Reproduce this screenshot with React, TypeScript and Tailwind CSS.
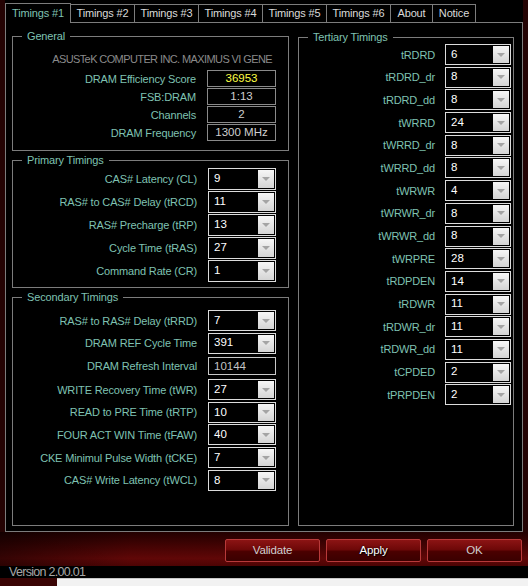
import React from "react";

const LABEL = "text-[11px] leading-[14px] tracking-[-0.15px] text-[#7fc2b2] whitespace-nowrap";

function Arrow() {
  return (
    <span className="my-[1px] mr-[1px] flex w-[16px] items-center justify-center bg-[linear-gradient(to_bottom,#f6f6f6,#d4d4d4)]">
      <span className="h-0 w-0 border-x-[4px] border-t-[4px] border-x-transparent border-t-[#a4a4a4]" />
    </span>
  );
}

function Dropdown({ value, w }: { value: string; w: string }) {
  return (
    <div className={`flex h-full ${w} border border-[#dcdcdc] bg-black`}>
      <span className="flex flex-1 items-center pl-[5px] text-[11.5px] leading-none text-white">{value}</span>
      <Arrow />
    </div>
  );
}

function DropRow({ label, value, h, w, gap }: { label: string; value: string; h: string; w: string; gap: string }) {
  return (
    <div className={`flex ${h} items-center justify-end ${gap}`}>
      <span className={LABEL}>{label}</span>
      <Dropdown value={value} w={w} />
    </div>
  );
}

function InfoRow({ label, value, yellow }: { label: string; value: string; yellow?: boolean }) {
  return (
    <div className="flex h-[17px] items-center justify-end gap-[11px]">
      <span className={LABEL}>{label}</span>
      <div
        className={`flex h-full w-[69px] items-center justify-center border border-[#8a8a8a] bg-black text-[11.5px] leading-none ${
          yellow ? "text-[#ffff44]" : "text-[#cfcfcf]"
        }`}
      >
        {value}
      </div>
    </div>
  );
}

function Legend({ children }: { children: React.ReactNode }) {
  return <legend className={`ml-[9px] px-[5px] py-0 ${LABEL}`}>{children}</legend>;
}

const tabs = [
  { t: "Timings #2", w: "w-[64px]" },
  { t: "Timings #3", w: "w-[64px]" },
  { t: "Timings #4", w: "w-[64px]" },
  { t: "Timings #5", w: "w-[64px]" },
  { t: "Timings #6", w: "w-[64px]" },
  { t: "About", w: "w-[42px]" },
  { t: "Notice", w: "w-[43px]" },
];

const primary = [
  ["CAS# Latency (CL)", "9"],
  ["RAS# to CAS# Delay (tRCD)", "11"],
  ["RAS# Precharge (tRP)", "13"],
  ["Cycle Time (tRAS)", "27"],
  ["Command Rate (CR)", "1"],
];

const secondaryA = [
  ["RAS# to RAS# Delay (tRRD)", "7"],
  ["DRAM REF Cycle Time", "391"],
];
const secondaryB = [
  ["WRITE Recovery Time (tWR)", "27"],
  ["READ to PRE Time (tRTP)", "10"],
  ["FOUR ACT WIN Time (tFAW)", "40"],
  ["CKE Minimul Pulse Width (tCKE)", "7"],
  ["CAS# Write Latency (tWCL)", "8"],
];

const tertiary = [
  ["tRDRD", "6"],
  ["tRDRD_dr", "8"],
  ["tRDRD_dd", "8"],
  ["tWRRD", "24"],
  ["tWRRD_dr", "8"],
  ["tWRRD_dd", "8"],
  ["tWRWR", "4"],
  ["tWRWR_dr", "8"],
  ["tWRWR_dd", "8"],
  ["tWRPRE", "28"],
  ["tRDPDEN", "14"],
  ["tRDWR", "11"],
  ["tRDWR_dr", "11"],
  ["tRDWR_dd", "11"],
  ["tCPDED", "2"],
  ["tPRPDEN", "2"],
];

function Button({ children, focus }: { children: React.ReactNode; focus?: boolean }) {
  return (
    <div
      className={`flex h-[23px] w-[95px] items-center justify-center rounded-[2px] border border-[#b83a3a] bg-[linear-gradient(to_bottom,#8c1414_0%,#6e0808_45%,#4a0000_55%,#3a0000_100%)] text-[11.5px] tracking-[-0.15px] ${
        focus ? "text-white [text-shadow:0_0_2px_#000,1px_1px_1px_#000]" : "text-[#cfcfcf]"
      }`}
    >
      {children}
    </div>
  );
}

export default function App() {
  return (
    <div className="flex h-[586px] w-[528px] flex-col overflow-hidden bg-[#240303] font-['Liberation_Sans',Arial,sans-serif]">
      {/* top area */}
      <div className="flex flex-col px-[5px]">
        {/* tabs */}
        <div className="flex h-[23px] items-end bg-black">
          <div className="flex h-[20px] w-[66px] items-center justify-center border-x border-t border-[#7c7c7c] bg-black pb-[1px] text-[11px] tracking-[-0.15px] text-[#7fc2b2]">
            Timings #1
          </div>
          {tabs.map((t) => (
            <div
              key={t.t}
              className={`flex h-[19px] ${t.w} items-center justify-center border-y border-r border-[#7c7c7c] text-[11px] tracking-[-0.15px] text-[#dadada]`}
            >
              {t.t}
            </div>
          ))}
          <div className="h-[19px] flex-1 border-b border-[#7c7c7c]" />
        </div>
        {/* panel */}
        <div className="flex h-[509px] gap-[9px] border-x border-b border-[#7c7c7c] bg-black pl-[6px] pt-[6px]">
          <div className="flex w-[277px] flex-col gap-[2px]">
            <fieldset className="m-0 h-[122px] border border-[#7c7c7c] p-0">
              <Legend>General</Legend>
              <div className="pr-[16px] pt-[9px] text-right text-[11px] leading-[14px] tracking-[-0.6px] text-[#8a8a8a]">
                ASUSTeK COMPUTER INC. MAXIMUS VI GENE
              </div>
              <div className="mt-[4px] flex flex-col gap-[1px] pr-[12px]">
                <InfoRow label="DRAM Efficiency Score" value="36953" yellow />
                <InfoRow label="FSB:DRAM" value="1:13" />
                <InfoRow label="Channels" value="2" />
                <InfoRow label="DRAM Frequency" value="1300 MHz" />
              </div>
            </fieldset>
            <fieldset className="m-0 h-[135px] border border-[#7c7c7c] p-0">
              <Legend>Primary Timings</Legend>
              <div className="flex flex-col gap-[1px] pr-[12px] pt-[1px]">
                {primary.map(([l, v]) => (
                  <DropRow key={l} label={l} value={v} h="h-[22px]" w="w-[68px]" gap="gap-[11px]" />
                ))}
              </div>
            </fieldset>
            <fieldset className="m-0 h-[236px] border border-[#7c7c7c] p-0">
              <Legend>Secondary Timings</Legend>
              <div className="flex flex-col gap-[1.7px] pr-[12px] pt-[6px]">
                {secondaryA.map(([l, v]) => (
                  <DropRow key={l} label={l} value={v} h="h-[21px]" w="w-[68px]" gap="gap-[11px]" />
                ))}
                <div className="my-[2px] flex h-[18px] items-center justify-end gap-[11px]">
                  <span className={LABEL}>DRAM Refresh Interval</span>
                  <div className="flex h-full w-[68px] items-center border border-[#c8c8c8] bg-black pl-[5px] pt-[1px] text-[11.5px] leading-none text-[#c4c4c4]">
                    10144
                  </div>
                </div>
                {secondaryB.map(([l, v]) => (
                  <DropRow key={l} label={l} value={v} h="h-[21px]" w="w-[68px]" gap="gap-[11px]" />
                ))}
              </div>
            </fieldset>
          </div>
          <fieldset className="m-0 mt-[1px] h-[496px] w-[216px] border border-[#7c7c7c] p-0">
            <Legend>Tertiary Timings</Legend>
            <div className="flex flex-col gap-[1.7px] pr-[2px]">
              {tertiary.map(([l, v]) => (
                <DropRow key={l} label={l} value={v} h="h-[21px]" w="w-[66px]" gap="gap-[10px]" />
              ))}
            </div>
          </fieldset>
        </div>
      </div>
      {/* bottom red area with buttons */}
      <div className="flex h-[34px] items-start justify-end gap-[6px] bg-[image:linear-gradient(to_right,rgba(0,0,0,0.45),rgba(0,0,0,0)_25%),linear-gradient(to_bottom,#220000_0%,#420303_40%,#600707_78%,#4c0404_100%)] pr-[6px] pt-[7px]">
        <Button>Validate</Button>
        <Button focus>Apply</Button>
        <Button>OK</Button>
      </div>
      {/* version strip */}
      <div className="flex h-[12px] items-end bg-black pl-[9px]">
        <span className="text-[12.5px] leading-[12px] tracking-[-0.7px] text-[#a6a6a6]">Version 2.00.01</span>
      </div>
      <div className="flex flex-1">
        <div className="w-[57px] bg-[#3a0404]" />
        <div className="flex-1 border-t border-[#c8c8c8] bg-[#f2f2f2]" />
      </div>
    </div>
  );
}
